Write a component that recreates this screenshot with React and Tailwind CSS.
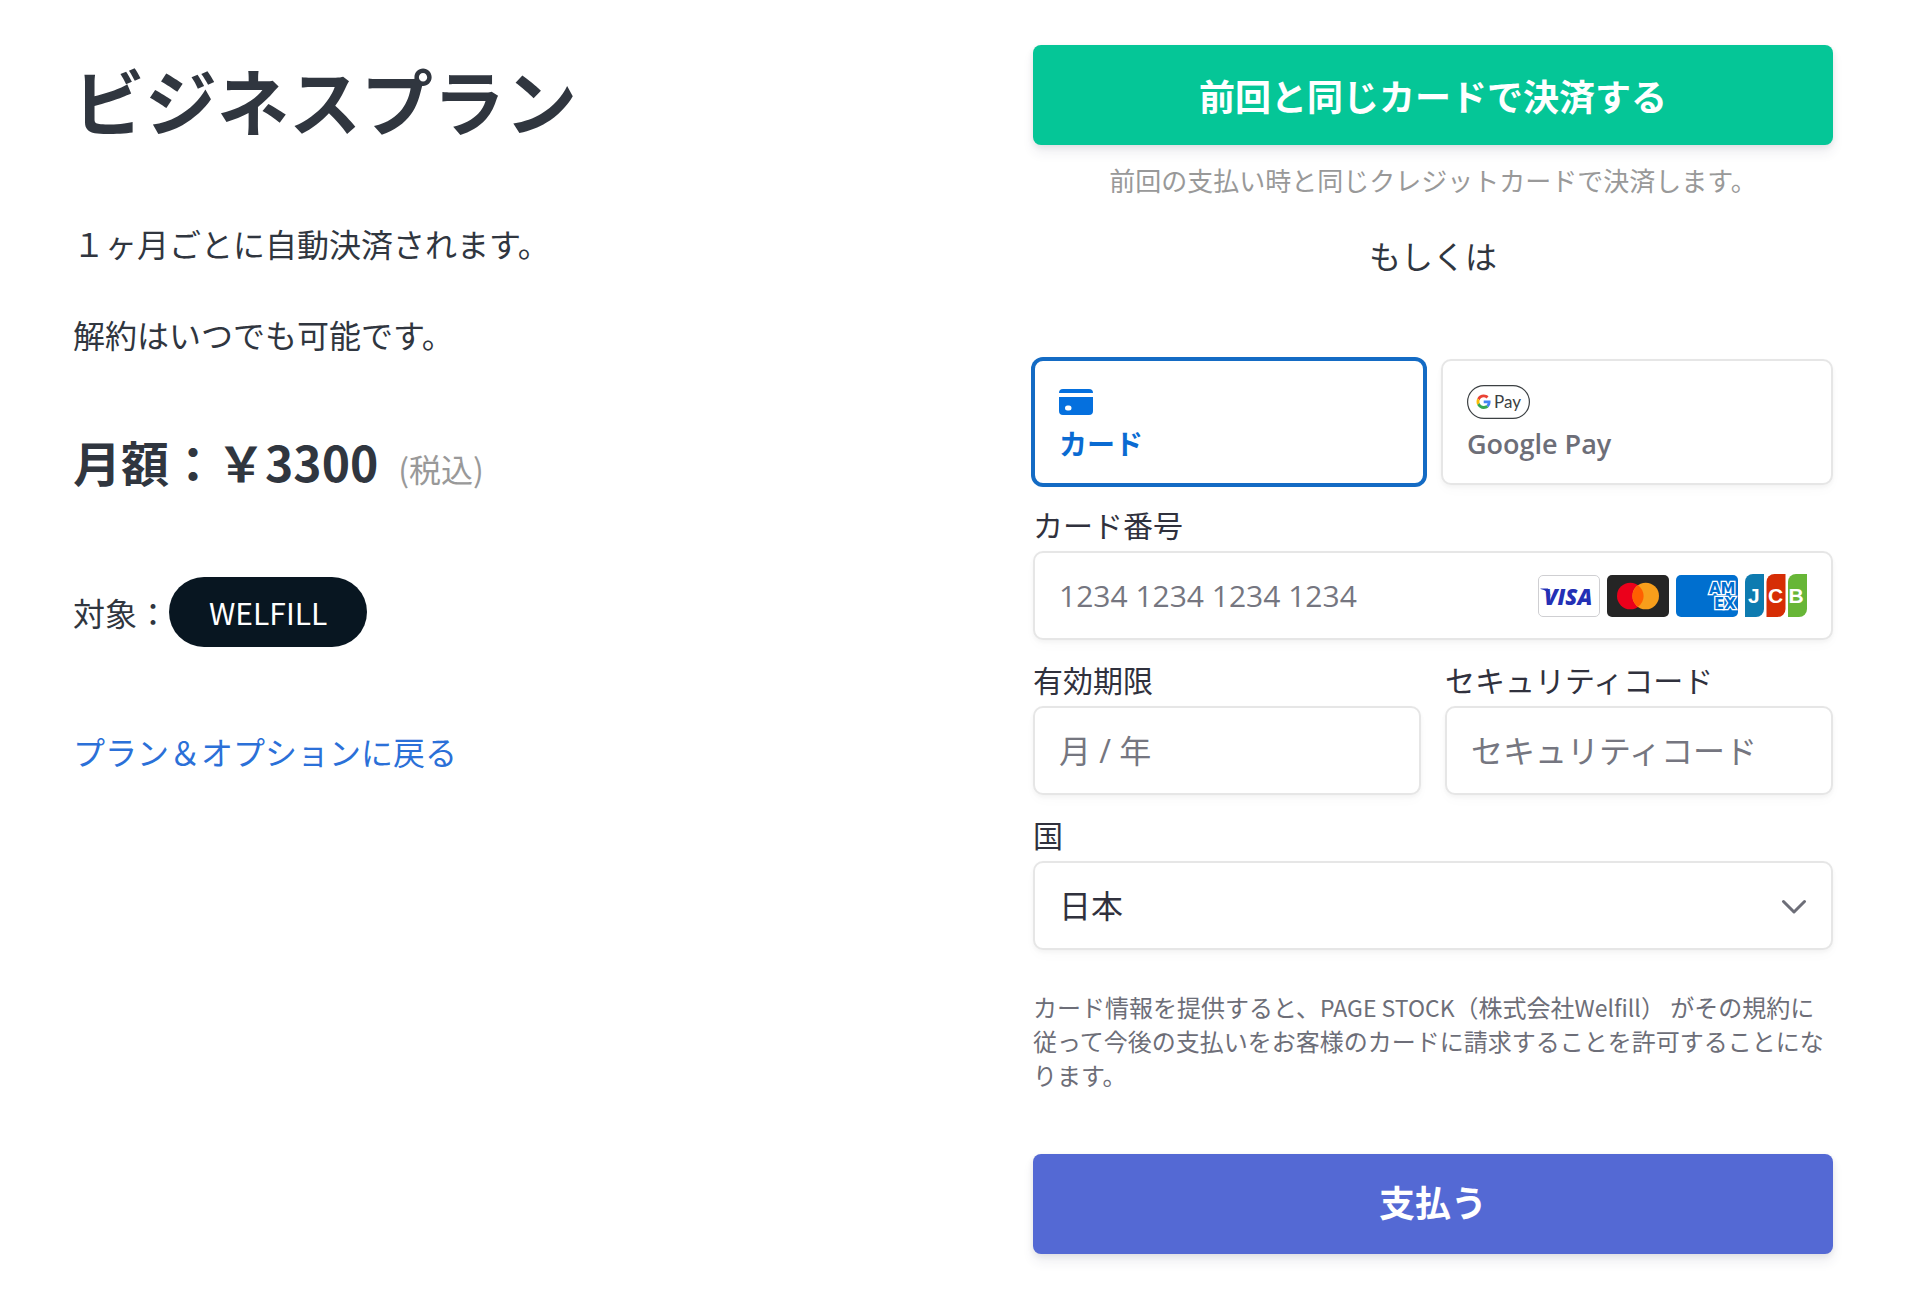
import React from "react";

const inputClass =
  "block h-[89px] w-full rounded-[10px] border-2 border-[#e6e6e6] bg-white px-6 text-[#30313d] placeholder-[#757680] shadow-[0_2px_4px_rgba(0,0,0,0.04),0_6px_12px_rgba(0,0,0,0.02)] outline-none";

function Field({ id, label, children }) {
  return (
    <div className="mt-5">
      <label htmlFor={id} className="mb-1 block text-[30px] leading-[42px] text-[#30313d]">
        {label}
      </label>
      {children}
    </div>
  );
}

function CardIcon() {
  return (
    <svg width="34" height="26" viewBox="0 0 34 26" fill="#0570de" aria-hidden="true">
      <path d="M4 0h26a4 4 0 0 1 4 4H0a4 4 0 0 1 4-4z" />
      <path
        fillRule="evenodd"
        d="M0 8h34v14a4 4 0 0 1-4 4H4a4 4 0 0 1-4-4V8zm8.500 8.500a2.500 2.500 0 0 0 0 5h1.500a2.500 2.500 0 0 0 0-5H8.500z"
      />
    </svg>
  );
}

function GooglePayMark() {
  return (
    <svg width="63" height="34" viewBox="0 0 63 34" aria-hidden="true">
      <rect x="0.600" y="0.600" width="61.800" height="32.800" rx="16.400" fill="#fff" stroke="#3c4043" strokeWidth="1.200" />
      <g transform="translate(9.500 9.500) scale(0.300)">
        <path fill="#EA4335" d="M24 9.500c3.540 0 6.710 1.220 9.210 3.600l6.850-6.850C35.900 2.380 30.470 0 24 0 14.620 0 6.510 5.380 2.560 13.220l7.980 6.190C12.430 13.720 17.740 9.500 24 9.500z" />
        <path fill="#4285F4" d="M46.980 24.550c0-1.570-.15-3.090-.38-4.550H24v9.020h12.940c-.58 2.960-2.260 5.480-4.780 7.180l7.730 6c4.510-4.180 7.090-10.360 7.090-17.650z" />
        <path fill="#FBBC05" d="M10.530 28.590c-.48-1.450-.76-2.990-.76-4.590s.27-3.140.76-4.590l-7.980-6.190C.92 16.460 0 20.120 0 24c0 3.880.92 7.540 2.560 10.780l7.970-6.190z" />
        <path fill="#34A853" d="M24 48c6.480 0 11.930-2.130 15.890-5.810l-7.730-6c-2.150 1.450-4.920 2.300-8.160 2.300-6.260 0-11.570-4.220-13.470-9.910l-7.980 6.190C6.510 42.620 14.620 48 24 48z" />
      </g>
      <text x="27" y="23" fontFamily="Lato, sans-serif" fontWeight="400" fontSize="17" fill="#3c4043">
        Pay
      </text>
    </svg>
  );
}

function Visa() {
  return (
    <svg width="62" height="42" viewBox="0 0 62 42" role="img" aria-label="Visa">
      <rect x="0.500" y="0.500" width="61" height="41" rx="4.500" fill="#fff" stroke="#cfcfd2" />
      <path d="M2.500 13.400h7.500l3 8c-2-4-5.500-6.500-10.500-7.500z" fill="#2430b5" />
      <text x="6" y="29.500" fontFamily="'Open Sans', sans-serif" fontWeight="800" fontStyle="italic" fontSize="22" fill="#2430b5">
        VISA
      </text>
    </svg>
  );
}

function Mastercard() {
  return (
    <svg width="62" height="42" viewBox="0 0 62 42" role="img" aria-label="Mastercard">
      <rect width="62" height="42" rx="5" fill="#252525" />
      <circle cx="23.300" cy="21" r="13.300" fill="#eb001b" />
      <circle cx="38.700" cy="21" r="13.300" fill="#f79e1b" />
      <path d="M31 10.150a13.300 13.300 0 0 1 0 21.700 13.300 13.300 0 0 1 0-21.700z" fill="#ff5f00" />
    </svg>
  );
}

function Amex() {
  return (
    <svg width="62" height="42" viewBox="0 0 62 42" role="img" aria-label="American Express">
      <clipPath id="amex-card">
        <rect width="62" height="42" rx="5" />
      </clipPath>
      <g clipPath="url(#amex-card)">
        <rect width="62" height="42" fill="#006fcf" />
        <g
          fontFamily="'DejaVu Sans', sans-serif"
          fontWeight="700"
          fontSize="15"
          fill="#006fcf"
          stroke="#fff"
          strokeWidth="2.600"
          paintOrder="stroke"
        >
          <text x="33" y="19">AM</text>
          <text x="38" y="34">EX</text>
        </g>
      </g>
    </svg>
  );
}

function Jcb() {
  return (
    <svg width="62" height="43" viewBox="0 0 62 43" role="img" aria-label="JCB">
      <path d="M8 0h11v35a8 8 0 0 1-8 8H0V8a8 8 0 0 1 8-8z" fill="#0e7bb0" />
      <path d="M29.500 0h11v35a8 8 0 0 1-8 8h-11V8a8 8 0 0 1 8-8z" fill="#d62d05" />
      <path d="M51 0h11v35a8 8 0 0 1-8 8H43V8a8 8 0 0 1 8-8z" fill="#67b637" />
      <g fontFamily="'Liberation Sans', sans-serif" fontWeight="700" fontSize="21" fill="#fff">
        <text x="3" y="29">J</text>
        <text x="23" y="29">C</text>
        <text x="43.500" y="29">B</text>
      </g>
    </svg>
  );
}

function PlanSummary() {
  return (
    <section>
      <h1 className="text-[72px] font-bold leading-[108px]">ビジネスプラン</h1>
      <p className="mt-[66px] text-[32px] leading-[48px]">１ヶ月ごとに自動決済されます。</p>
      <p className="mt-[43px] text-[32px] leading-[48px]">解約はいつでも可能です。</p>
      <p className="mt-[67px] text-[48px] font-bold leading-[72px]">
        月額：￥3300
        <span className="ml-5 text-[32px] font-normal text-[#999]">(税込)</span>
      </p>
      <div className="mt-[73px] flex items-center text-[32px] leading-[48px]">
        対象：
        <span className="rounded-full bg-[#081621] px-10 py-[11px] text-[30px] text-white">WELFILL</span>
      </div>
      <a href="#plans" className="mt-20 inline-block text-[32px] leading-[48px] text-[#2b70d8]">
        プラン＆オプションに戻る
      </a>
    </section>
  );
}

function PaymentForm() {
  return (
    <form className="font-['Open_Sans','Noto_Sans_CJK_JP',sans-serif]" onSubmit={(e) => e.preventDefault()}>
      <div role="tablist" aria-label="支払い方法" className="mt-20 grid grid-cols-2 gap-4">
        <button
          type="button"
          role="tab"
          aria-selected="true"
          className="rounded-[10px] border-2 border-[#146bc4] bg-white px-6 pb-[18px] pt-6 text-left text-[28px] font-semibold leading-[42px] text-[#0a6bd2] ring-2 ring-[#146bc4]"
        >
          <span className="mb-1 flex h-[34px] items-center">
            <CardIcon />
          </span>
          <span className="block">カード</span>
        </button>
        <button
          type="button"
          role="tab"
          aria-selected="false"
          className="rounded-[10px] border-2 border-[#e6e6e6] bg-white px-6 pb-[18px] pt-6 text-left text-[27px] font-semibold leading-[42px] text-[#6d6e78] shadow-[0_2px_4px_rgba(0,0,0,0.04),0_6px_12px_rgba(0,0,0,0.02)]"
        >
          <span className="mb-1 flex h-[34px] items-center">
            <GooglePayMark />
          </span>
          <span className="block">Google Pay</span>
        </button>
      </div>

      <Field id="card-number" label="カード番号">
        <div className="relative">
          <input
            id="card-number"
            className={inputClass + " pr-[310px] text-[30px]"}
            inputMode="numeric"
            placeholder="1234 1234 1234 1234"
          />
          <div className="pointer-events-none absolute inset-y-0 right-[26px] flex items-center gap-[7px]">
            <Visa />
            <Mastercard />
            <Amex />
            <Jcb />
          </div>
        </div>
      </Field>

      <div className="grid grid-cols-2 gap-6">
        <Field id="expiry" label="有効期限">
          <input id="expiry" className={inputClass + " text-[32px]"} placeholder="月 / 年" />
        </Field>
        <Field id="cvc" label="セキュリティコード">
          <input id="cvc" className={inputClass + " text-[32px]"} placeholder="セキュリティコード" />
        </Field>
      </div>

      <Field id="country" label="国">
        <div className="relative">
          <select id="country" className={inputClass + " appearance-none text-[32px]"} defaultValue="JP">
            <option value="JP">日本</option>
          </select>
          <svg
            className="pointer-events-none absolute inset-y-0 right-[26px] my-auto"
            width="26"
            height="16"
            viewBox="0 0 26 16"
            fill="none"
            stroke="#6d6e78"
            strokeWidth="3"
            strokeLinecap="round"
            strokeLinejoin="round"
            aria-hidden="true"
          >
            <path d="M2.500 3.500 13 14 23.500 3.500" />
          </svg>
        </div>
      </Field>

      <p className="mt-10 font-['Noto_Sans_CJK_JP',sans-serif] text-[24px] leading-[34px] text-[#6d6e78]">
        カード情報を提供すると、<span className="text-[23px]">PAGE STOCK</span>（株式会社
        <span className="text-[23px]">Welfill</span>） がその規約に従って今後の支払いをお客様のカードに請求することを許可することになります。
      </p>

      <button
        type="submit"
        className="mt-[62px] flex h-[100px] w-full items-center justify-center rounded-lg bg-[#5469d4] text-[36px] font-bold text-white shadow-[0_8px_12px_rgba(50,50,93,0.08),0_2px_6px_rgba(0,0,0,0.08)]"
      >
        支払う
      </button>
    </form>
  );
}

export default function App() {
  return (
    <main
      lang="ja"
      className="grid min-h-screen grid-cols-2 gap-40 bg-white pb-[60px] pl-[73px] pr-[75px] pt-[45px] font-['Noto_Sans_CJK_JP',sans-serif] text-[#30363f]"
    >
      <PlanSummary />
      <section>
        <button
          type="button"
          className="flex h-[100px] w-full items-center justify-center rounded-lg bg-[#05c697] text-[36px] font-bold text-white shadow-[0_8px_12px_rgba(50,50,93,0.08),0_2px_6px_rgba(0,0,0,0.08)]"
        >
          前回と同じカードで決済する
        </button>
        <p className="mt-4 text-center text-[26px] leading-[38px] text-[#999]">
          前回の支払い時と同じクレジットカードで決済します。
        </p>
        <p className="mt-8 text-center text-[32px] leading-[48px]">もしくは</p>
        <PaymentForm />
      </section>
    </main>
  );
}
